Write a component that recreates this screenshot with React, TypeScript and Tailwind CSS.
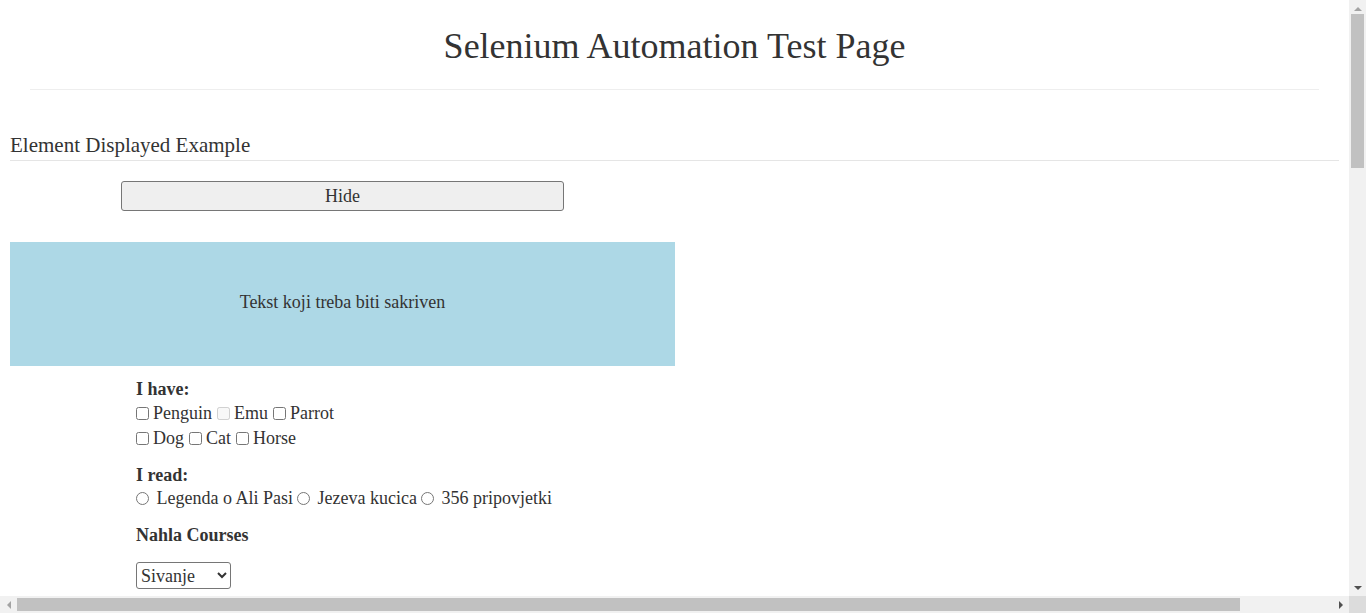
import { useState } from 'react';

const animals = [
  [
    { label: 'Penguin', disabled: false },
    { label: 'Emu', disabled: true },
    { label: 'Parrot', disabled: false },
  ],
  [
    { label: 'Dog', disabled: false },
    { label: 'Cat', disabled: false },
    { label: 'Horse', disabled: false },
  ],
];

const books = ['Legenda o Ali Pasi', 'Jezeva kucica', '356 pripovjetki'];

function Arrow({ dir, dark }: { dir: 'up' | 'down' | 'left' | 'right'; dark?: boolean }) {
  const pts = {
    up: '4,1 8,5 0,5',
    down: '0,1 8,1 4,5',
    left: '5,0 5,8 1,4',
    right: '1,0 1,8 5,4',
  }[dir];
  const vertical = dir === 'up' || dir === 'down';
  return (
    <div className="flex h-[17px] w-[17px] shrink-0 items-center justify-center">
      <svg width={vertical ? 8 : 6} height={vertical ? 6 : 8} viewBox={vertical ? '0 0 8 6' : '0 0 6 8'}>
        <polygon points={pts} fill={dark ? '#505050' : '#a3a3a3'} />
      </svg>
    </div>
  );
}

export default function App() {
  const [hidden, setHidden] = useState(false);

  return (
    <div className="flex h-[613px] w-[1366px] flex-col overflow-hidden bg-white text-[#333] font-['Liberation_Serif',serif]">
      <div className="flex min-h-0 flex-1">
        {/* Page content */}
        <div className="min-w-0 flex-1 overflow-hidden">
          <h1 className="pt-[25px] text-center text-[36px] leading-[43px]">
            Selenium Automation Test Page
          </h1>
          <hr className="mx-[30px] mt-[21px] border-t border-[#eee]" />

          <div className="px-[10px]">
            <h3 className="mt-[42px] border-b border-[#e5e5e5] pb-[2px] text-[21px] leading-[26px]">
              Element Displayed Example
            </h3>

            <div className="w-[665px]">
              <button
                onClick={() => setHidden(!hidden)}
                className="mx-auto mt-[20px] block h-[30px] w-[443px] rounded-[3px] border border-[#767676] bg-[#efefef] text-[18px] leading-none"
              >
                {hidden ? 'Show' : 'Hide'}
              </button>

              <div className="mt-[31px] flex h-[124px] items-center justify-center bg-[#add8e6] pb-[3px] text-[18px]">
                {!hidden && 'Tekst koji treba biti sakriven'}
              </div>

              <div className="pl-[126px] text-[18px] leading-[25px]">
                <div className="mt-[10px] pt-[2px] font-bold leading-[23px]">I have:</div>
                {animals.map((row, i) => (
                  <div key={i}>
                    {row.map((a, j) => (
                      <label key={a.label} className={j > 0 ? 'ml-[5px]' : ''}>
                        <input type="checkbox" disabled={a.disabled} className="m-0 mr-[4px] align-[-1px]" />
                        {a.label}
                      </label>
                    ))}
                  </div>
                ))}

                <div className="mt-[10px] pt-[4px] font-bold leading-[21px]">I read:</div>
                <div>
                  {books.map((b, j) => (
                    <label key={b} className={j > 0 ? 'ml-[4px]' : ''}>
                      <input type="radio" name="book" className="m-0 mr-[3px] align-[-1px]" /> {b}
                    </label>
                  ))}
                </div>

                <div className="mt-[10px] pt-[4px] font-bold leading-[21px]">Nahla Courses</div>
                <select className="mt-[16px] h-[27px] w-[95px] rounded-[3px] border border-[#767676] bg-white text-[18px]">
                  <option>Sivanje</option>
                  <option>Kuhanje</option>
                  <option>Pletenje</option>
                </select>
              </div>
            </div>
          </div>
        </div>

        {/* Vertical scrollbar */}
        <div className="flex w-[17px] shrink-0 flex-col bg-[#f1f1f1]">
          <Arrow dir="up" />
          <div className="mx-[2px] -mt-[3px] h-[154px] bg-[#c1c1c1]" />
          <div className="flex-1" />
          <Arrow dir="down" dark />
        </div>
      </div>

      {/* Horizontal scrollbar */}
      <div className="flex h-[17px] shrink-0">
        <div className="flex flex-1 items-center bg-[#f1f1f1]">
          <Arrow dir="left" />
          <div className="h-[13px] w-[1223px] bg-[#c1c1c1]" />
          <div className="flex-1" />
          <Arrow dir="right" dark />
        </div>
        <div className="w-[17px] bg-[#dcdcdc]" />
      </div>
    </div>
  );
}
